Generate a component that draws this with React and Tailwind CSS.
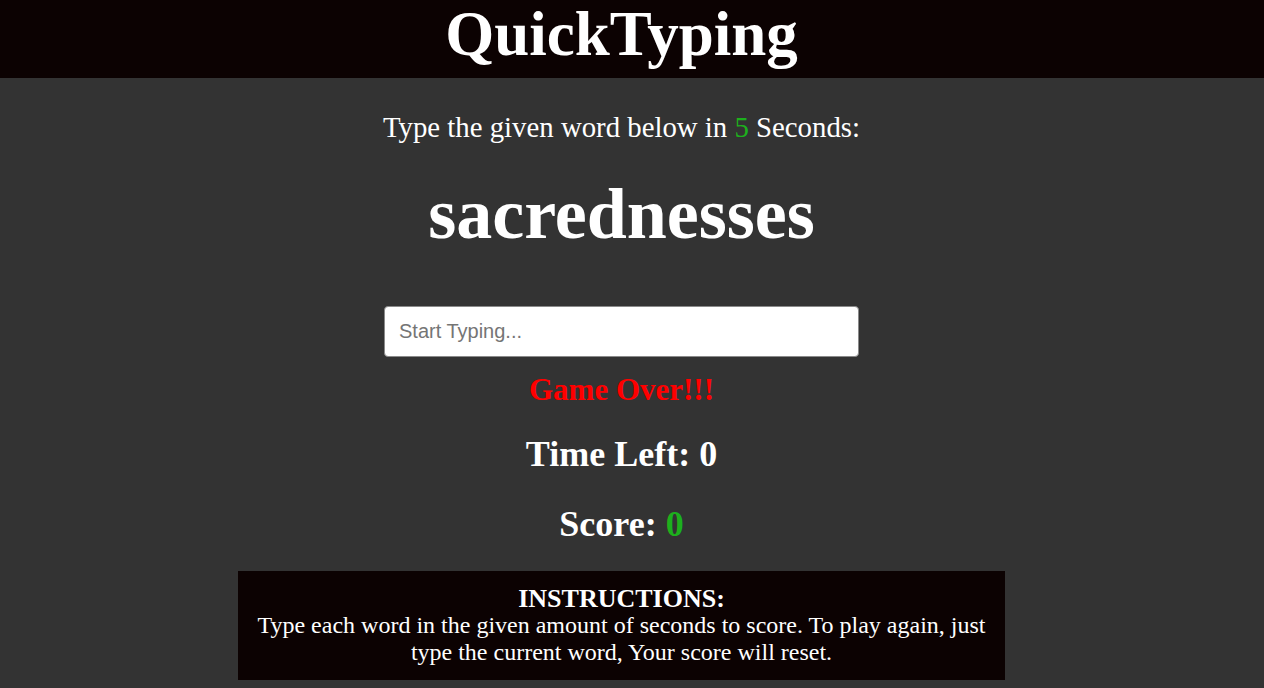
import React from "react";

const serif = { fontFamily: '"Liberation Serif", "Times New Roman", serif' };

export default function App() {
  return (
    <div className="min-h-[688px] bg-[#333333] text-white" style={serif}>
      <header className="h-[78px] bg-[#0c0202] flex items-center justify-center pr-[21px] pb-[9px]">
        <h1 className="text-[63px] font-bold leading-none">QuickTyping</h1>
      </header>
      <main className="flex flex-col items-center pr-[21px]">
        <p className="mt-[35px] text-[28.8px] leading-none">
          Type the given word below in <span className="text-[#1db01d]">5</span> Seconds:
        </p>
        <h2 className="mt-[36px] text-[72px] font-bold leading-none">sacrednesses</h2>
        <input
          type="text"
          placeholder="Start Typing..."
          className="mt-[56px] w-[475px] h-[51px] bg-white rounded-[4px] border border-[#8a8a8a] px-[14px] text-[20px] text-gray-800 placeholder:text-[#757575] outline-none"
          style={{ fontFamily: '"Liberation Sans", Arial, sans-serif' }}
        />
        <p className="mt-[17px] text-[31px] font-bold text-[#ff0000] leading-none">Game Over!!!</p>
        <p className="mt-[31px] text-[36px] font-bold leading-none">Time Left: 0</p>
        <p className="mt-[34px] text-[36px] font-bold leading-none">
          Score: <span className="text-[#1db01d]">0</span>
        </p>
        <div className="mt-[29px] w-[767px] bg-[#0c0202] py-[14px] px-[18px] text-center">
          <p className="text-[26px] font-bold leading-[27px]">INSTRUCTIONS:</p>
          <p className="text-[24px] leading-[27px]">
            Type each word in the given amount of seconds to score. To play again, just type the current word, Your score will reset.
          </p>
        </div>
      </main>
    </div>
  );
}
